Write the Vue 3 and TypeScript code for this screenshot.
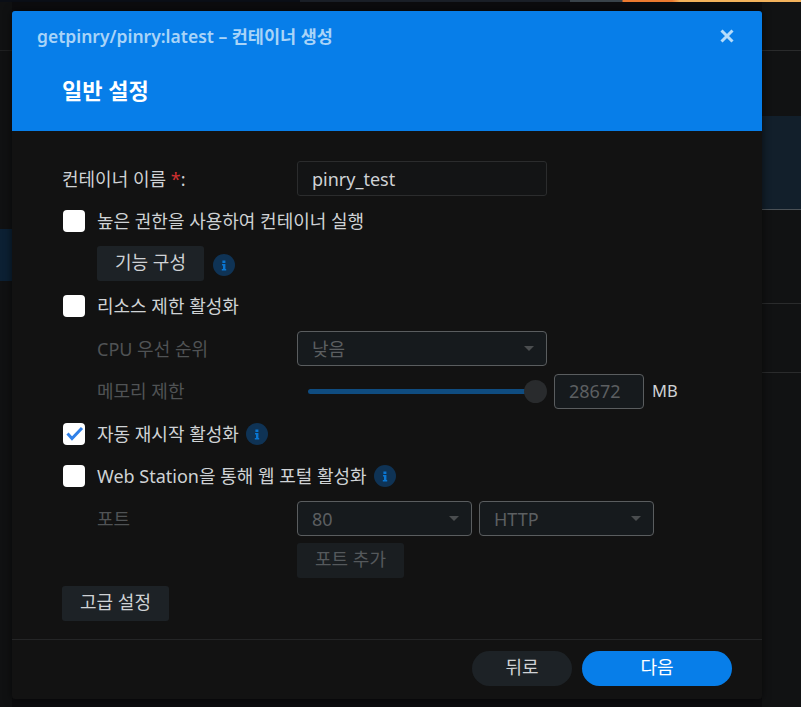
<script setup lang="ts">
const infoSize: number = 22
</script>

<template>
  <div class="page">
    <div class="strip"></div>
    <div class="backdrop">
      <aside class="left">
        <div class="left-line"></div>
        <div class="left-active"></div>
      </aside>
      <div class="center"></div>
      <aside class="right">
        <div class="r-row r-first"></div>
        <div class="r-row r-second"></div>
        <div class="r-row r-active"></div>
        <div class="r-row r-third"></div>
        <div class="r-row r-fourth"></div>
      </aside>
    </div>

    <section class="modal">
      <header class="head">
        <div class="title-bar">
          <span class="title">getpinry/pinry:latest – 컨테이너 생성</span>
          <svg class="close" width="14" height="14" viewBox="0 0 14 14"><path d="M1.500 1.500 12.500 12.500M12.500 1.500 1.500 12.500" stroke="#b5dcfb" stroke-width="3" fill="none"/></svg>
        </div>
        <h1 class="step">일반 설정</h1>
      </header>

      <main class="body">
        <div class="row">
          <label class="label">컨테이너 이름 <b class="req">*</b>:</label>
          <div class="input name">pinry_test</div>
        </div>
        <div class="row">
          <span class="box"></span>
          <span class="text">높은 권한을 사용하여 컨테이너 실행</span>
        </div>
        <div class="row indent">
          <div class="btn">기능 구성</div>
          <span class="info after-btn"><svg :width="infoSize" :height="infoSize" viewBox="0 0 22 22"><circle cx="11" cy="11" r="11" fill="#0f3355"/><path d="M9.400 6.500h3v2.400h-3zM9 10h3.400v5H13.200v1.500H8.800V15H10v-3.500H9z" fill="#0a76d2"/></svg></span>
        </div>
        <div class="row">
          <span class="box"></span>
          <span class="text">리소스 제한 활성화</span>
        </div>
        <div class="row indent">
          <span class="sub dim">CPU 우선 순위</span>
          <div class="select wide"><span>낮음</span><i class="caret"></i></div>
        </div>
        <div class="row indent">
          <span class="sub dim">메모리 제한</span>
          <div class="slider"><div class="track"></div><div class="thumb"></div></div>
          <div class="input num">28672</div>
          <span class="unit">MB</span>
        </div>
        <div class="row">
          <span class="box">
            <svg width="22" height="22" viewBox="0 0 22 22"><path d="M4.500 10.500 9 15.500 19 5" stroke="#2f80e8" stroke-width="3" fill="none"/></svg>
          </span>
          <span class="text">자동 재시작 활성화</span>
          <span class="info"><svg :width="infoSize" :height="infoSize" viewBox="0 0 22 22"><circle cx="11" cy="11" r="11" fill="#0f3355"/><path d="M9.400 6.500h3v2.400h-3zM9 10h3.400v5H13.200v1.500H8.800V15H10v-3.500H9z" fill="#0a76d2"/></svg></span>
        </div>
        <div class="row">
          <span class="box"></span>
          <span class="text">Web Station을 통해 웹 포털 활성화</span>
          <span class="info"><svg :width="infoSize" :height="infoSize" viewBox="0 0 22 22"><circle cx="11" cy="11" r="11" fill="#0f3355"/><path d="M9.400 6.500h3v2.400h-3zM9 10h3.400v5H13.200v1.500H8.800V15H10v-3.500H9z" fill="#0a76d2"/></svg></span>
        </div>
        <div class="row indent">
          <span class="sub dim">포트</span>
          <div class="select port"><span>80</span><i class="caret"></i></div>
          <div class="select proto"><span>HTTP</span><i class="caret"></i></div>
        </div>
        <div class="row indent add-row">
          <span class="sub"></span>
          <div class="btn off">포트 추가</div>
        </div>
        <div class="row">
          <div class="btn">고급 설정</div>
        </div>
      </main>

      <footer class="foot">
        <div class="pill back">뒤로</div>
        <div class="pill next">다음</div>
      </footer>
    </section>
  </div>
</template>

<style scoped>
.page {
  position: relative;
  width: 801px;
  height: 707px;
  overflow: hidden;
  background: #0c0c0e;
  font-family: "Noto Sans", "Noto Sans CJK KR", sans-serif;
  font-size: 18px;
  line-height: 24px;
  color: #cfd2d5;
}
.strip {
  height: 2px;
  background: linear-gradient(90deg, #0a0e16 0 300px, #1a1f27 300px 570px, #39434a 570px 622px, #ec7a30 623px 672px, #f3b25c 680px 801px);
}
.backdrop {
  height: 705px;
  display: flex;
}
.left {
  width: 12px;
  background: #101112;
}
.left-line {
  height: 48px;
  border-bottom: 1px solid #1f2021;
}
.left-active {
  margin-top: 178px;
  height: 52px;
  background: #0c2033;
}
.center {
  flex: 1;
}
.right {
  width: 39px;
  background: #111213;
}
.r-row {
  border-bottom: 1px solid #2a2b2c;
}
.r-first { height: 48px; }
.r-second { height: 65px; border-bottom: 0; }
.r-active { height: 93px; background: #121f2b; border-bottom-color: #4b5156; }
.r-third { height: 93px; }
.r-fourth { height: 68px; }

.modal {
  position: absolute;
  left: 12px;
  top: 11px;
  width: 750px;
  height: 688px;
  display: flex;
  flex-direction: column;
  background: #121212;
  border-radius: 3px;
  overflow: hidden;
  box-shadow: 0 0 8px rgba(0, 0, 0, 0.6);
}
.head {
  height: 120px;
  flex: none;
  background: #077ee9;
  padding: 0 28px 0 25px;
}
.title-bar {
  height: 50px;
  display: flex;
  align-items: center;
  justify-content: space-between;
}
.title {
  font-size: 17.500px;
  font-weight: 600;
  color: #a9d4f8;
}
.close { display: block; }
.step {
  margin: 10px 0 0 25px;
  font-size: 22px;
  line-height: 38px;
  font-weight: 700;
  color: #fff;
}
.body {
  flex: 1;
  padding: 30px 50px 0;
  display: flex;
  flex-direction: column;
  gap: 7.500px;
}
.row {
  height: 35px;
  flex: none;
  display: flex;
  align-items: center;
}
.add-row {
  margin: -0.400px 0 0.400px;
}
.indent {
  padding-left: 35px;
}
.label {
  width: 235px;
  flex: none;
}
.req {
  color: #d03030;
  font-weight: 400;
}
.input {
  height: 35px;
  box-sizing: border-box;
  display: flex;
  align-items: center;
  border-radius: 3px;
}
.name {
  width: 250px;
  padding-left: 14px;
  border: 1px solid #2b2c2d;
  background: #131415;
}
.box {
  width: 22px;
  height: 22px;
  flex: none;
  margin: 0 12px 0 1px;
  border-radius: 4px;
  background: #fff;
  display: block;
}
.box svg { display: block; }
.btn {
  width: 107px;
  height: 35px;
  box-sizing: border-box;
  padding-bottom: 3px;
  border-radius: 3px;
  background: #1d2226;
  display: flex;
  align-items: center;
  justify-content: center;
}
.btn.off { color: #55595c; background: #1a1e21; }
.info { display: flex; margin-left: 7px; }
.after-btn { margin: 2px 0 0 9px; }
.sub {
  width: 200px;
  flex: none;
}
.dim { color: #505355; }
.select {
  height: 35px;
  box-sizing: border-box;
  border: 1px solid #5a5d5f;
  border-radius: 4px;
  background: #161a1d;
  color: #5c5f61;
  display: flex;
  align-items: center;
  justify-content: space-between;
  padding: 0 12px 0 14px;
}
.wide { width: 250px; }
.port { width: 175px; margin-right: 7px; }
.proto { width: 175px; }
.caret {
  width: 0;
  height: 0;
  border-left: 5.500px solid transparent;
  border-right: 5.500px solid transparent;
  border-top: 5px solid #4a4d4f;
}
.slider {
  position: relative;
  width: 250px;
  height: 35px;
  flex: none;
  margin-right: 7px;
}
.track {
  position: absolute;
  left: 11px;
  right: 16px;
  top: 15px;
  height: 5px;
  border-radius: 3px;
  background: #0f4c80;
}
.thumb {
  position: absolute;
  right: 0;
  top: 6px;
  width: 23px;
  height: 23px;
  border-radius: 50%;
  background: #292b2d;
}
.num {
  width: 90px;
  padding-left: 14px;
  border: 1px solid #5a5d5f;
  border-radius: 4px;
  background: #161a1d;
  color: #5c5f61;
}
.unit {
  margin-left: 8px;
  font-size: 16.500px;
}
.foot {
  height: 60px;
  flex: none;
  box-sizing: border-box;
  border-top: 1px solid #242526;
  display: flex;
  justify-content: flex-end;
  align-items: flex-start;
  gap: 10px;
  padding: 11px 30px 0 0;
}
.pill {
  height: 35px;
  box-sizing: border-box;
  padding-bottom: 3px;
  border-radius: 18px;
  display: flex;
  align-items: center;
  justify-content: center;
}
.back { width: 100px; background: #1d2226; }
.next { width: 150px; background: #077ee9; color: #fff; }
</style>

<style>
html, body { margin: 0; background: #0c0c0e; }
</style>
